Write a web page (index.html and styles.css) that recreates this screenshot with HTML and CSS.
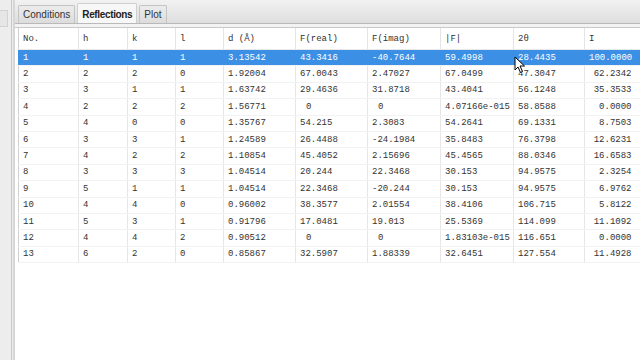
FILE: index.html
```html
<!DOCTYPE html>
<html lang="en">
<head>
    <meta charset="UTF-8">
    <title>Reflections</title>
    <link rel="stylesheet" href="styles.css">
</head>
<body>
    <div class="window">
        <div class="side-panel">
            <div class="side-box"></div>
        </div>
        <div class="side-edge"></div>
        <div class="main-panel">
            <div class="tab-bar">
                <div class="tab">Conditions</div>
                <div class="tab active">Reflections</div>
                <div class="tab">Plot</div>
            </div>
            <div class="tab-line"></div>
            <div class="table-wrap">
                <table class="refl-table">
                    <colgroup>
                        <col style="width:60px"><col style="width:49px"><col style="width:48px"><col style="width:48px">
                        <col style="width:72px"><col style="width:72px"><col style="width:73px"><col style="width:73px">
                        <col style="width:71px"><col style="width:56px">
                    </colgroup>
                    <thead>
                        <tr><th>No.</th><th>h</th><th>k</th><th>l</th><th>d (Å)</th><th>F(real)</th><th>F(imag)</th><th>|F|</th><th>2θ</th><th>I</th></tr>
                    </thead>
                    <tbody>
                        <tr class="selected"><td>1</td><td>1</td><td>1</td><td>1</td><td>3.13542</td><td>43.3416</td><td>-40.7644</td><td>59.4998</td><td>28.4435</td><td class="num">100.0000</td></tr>
                        <tr><td>2</td><td>2</td><td>2</td><td>0</td><td>1.92004</td><td>67.0043</td><td>2.47027</td><td>67.0499</td><td>47.3047</td><td class="num">62.2342</td></tr>
                        <tr><td>3</td><td>3</td><td>1</td><td>1</td><td>1.63742</td><td>29.4636</td><td>31.8718</td><td>43.4041</td><td>56.1248</td><td class="num">35.3533</td></tr>
                        <tr><td>4</td><td>2</td><td>2</td><td>2</td><td>1.56771</td><td class="zero">0</td><td class="zero">0</td><td>4.07166e-015</td><td>58.8588</td><td class="num">0.0000</td></tr>
                        <tr><td>5</td><td>4</td><td>0</td><td>0</td><td>1.35767</td><td>54.215</td><td>2.3083</td><td>54.2641</td><td>69.1331</td><td class="num">8.7503</td></tr>
                        <tr><td>6</td><td>3</td><td>3</td><td>1</td><td>1.24589</td><td>26.4488</td><td>-24.1984</td><td>35.8483</td><td>76.3798</td><td class="num">12.6231</td></tr>
                        <tr><td>7</td><td>4</td><td>2</td><td>2</td><td>1.10854</td><td>45.4052</td><td>2.15696</td><td>45.4565</td><td>88.0346</td><td class="num">16.6583</td></tr>
                        <tr><td>8</td><td>3</td><td>3</td><td>3</td><td>1.04514</td><td>20.244</td><td>22.3468</td><td>30.153</td><td>94.9575</td><td class="num">2.3254</td></tr>
                        <tr><td>9</td><td>5</td><td>1</td><td>1</td><td>1.04514</td><td>22.3468</td><td>-20.244</td><td>30.153</td><td>94.9575</td><td class="num">6.9762</td></tr>
                        <tr><td>10</td><td>4</td><td>4</td><td>0</td><td>0.96002</td><td>38.3577</td><td>2.01554</td><td>38.4106</td><td>106.715</td><td class="num">5.8122</td></tr>
                        <tr><td>11</td><td>5</td><td>3</td><td>1</td><td>0.91796</td><td>17.0481</td><td>19.013</td><td>25.5369</td><td>114.099</td><td class="num">11.1092</td></tr>
                        <tr><td>12</td><td>4</td><td>4</td><td>2</td><td>0.90512</td><td class="zero">0</td><td class="zero">0</td><td>1.83103e-015</td><td>116.651</td><td class="num">0.0000</td></tr>
                        <tr><td>13</td><td>6</td><td>2</td><td>0</td><td>0.85867</td><td>32.5907</td><td>1.88339</td><td>32.6451</td><td>127.554</td><td class="num">11.4928</td></tr>
                    </tbody>
                </table>
            </div>
        </div>
    </div>

    <!-- mouse pointer over the 2θ column -->
    <svg class="pointer" width="12" height="18" viewBox="0 0 12 18">
        <path d="M1 1 L1 14 L4 11 L6.5 16.5 L8.5 15.5 L6 10 L10.5 10 Z" fill="#fff" stroke="#000" stroke-width="1" stroke-linejoin="round"/>
    </svg>
</body>
</html>
```

FILE: styles.css
```css
html, body { margin: 0; padding: 0; background: #fff; }
body { width: 640px; height: 360px; overflow: hidden; position: relative; font-family: "Liberation Sans", Arial, sans-serif; }
.window { display: flex; height: 100%; }
.side-panel { width: 11px; background: #ededed; padding-top: 10px; box-sizing: border-box; }
.side-box { width: 7px; height: 15px; border: 1px solid #d2d2d2; border-left: none; background: #e6e6e6; }
.side-edge { width: 4px; border-left: 1px solid #c9c9c9; border-right: 2px solid #d6d6d6; background: #ececec; box-sizing: border-box; }
.main-panel { flex: 1; display: flex; flex-direction: column; min-width: 0; overflow: hidden; }

/* tabs */
.tab-bar { height: 23px; display: flex; align-items: flex-end; padding-left: 3px; background: linear-gradient(#f2f2f2, #dedede); box-sizing: border-box; }
.tab { height: 17px; padding: 0 4px; margin-right: 2px; font-size: 10px; line-height: 18px; color: #333; background: linear-gradient(#ececec, #dcdcdc); border: 1px solid #c4c4c4; border-bottom: none; border-radius: 2px 2px 0 0; }
.tab.active { height: 19px; line-height: 21px; font-weight: bold; letter-spacing: -0.35px; color: #222; background: #f7f7f7; border-color: #cfcfcf; }
.tab-line { height: 3px; border-top: 1px solid #b9b9b9; border-bottom: 1px solid #c9c9c9; background: #f3f3f3; }

/* table */
.table-wrap { flex: 1; padding: 0 0 0 3px; background: #fff; }
.refl-table { border-collapse: collapse; table-layout: fixed; width: 622px; font-family: "Liberation Mono", "Courier New", monospace; font-size: 9px; color: #333; }
.refl-table th { height: 21px; padding: 0 4px; text-align: left; font-weight: normal; border-left: 1px solid #e4e4e4; border-bottom: 1px solid #e8e8e8; }
.refl-table th:first-child { border-left: 1px solid #d0d0d0; }
.refl-table td { height: 16.4px; padding: 0 4px; box-sizing: border-box; white-space: nowrap; border-left: 1px solid #e6e6e6; border-bottom: 1px solid #f2f2f2; }
.refl-table td:first-child { border-left: 1px solid #d0d0d0; }
.refl-table td.num { text-align: right; padding-right: 9px; }
.refl-table td.zero { padding-left: 10px; }
.refl-table tr.selected td { background: #3b8fe4; color: #fff; border-left-color: #3b8fe4; }

.pointer { position: absolute; left: 514px; top: 56px; }
```
